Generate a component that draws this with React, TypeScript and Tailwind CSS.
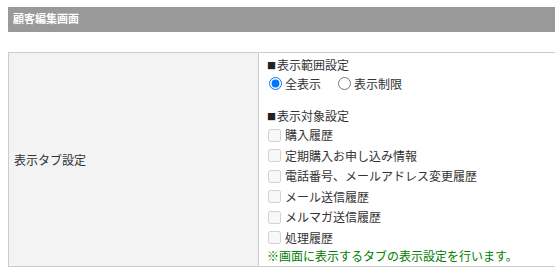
import React from "react";

const font = { fontFamily: '"Noto Sans CJK JP", "Noto Sans", sans-serif' };

const items = [
  "購入履歴",
  "定期購入お申し込み情報",
  "電話番号、メールアドレス変更履歴",
  "メール送信履歴",
  "メルマガ送信履歴",
  "処理履歴",
];

export default function App() {
  return (
    <div
      className="w-[555px] h-[271px] overflow-hidden bg-white pt-[7px] pl-[8px] text-[12px] text-[#333]"
      style={font}
    >
      <div className="w-[640px] h-[25px] bg-[#999999] flex items-center pl-[5px] pb-[2px]">
        <span className="text-white font-bold text-[11px]">顧客編集画面</span>
      </div>
      <div className="mt-[20px] w-[640px] flex border border-[#cccccc]">
        <div className="w-[250px] shrink-0 bg-[#f2f3f2] border-r border-[#cccccc] flex items-center pl-[5px] pt-[1px]">
          表示タブ設定
        </div>
        <div className="flex-1 pl-[8px] pt-[3px] pb-[3px]">
          <div className="h-[18px] flex items-center">
            <span className="inline-block w-[10px] text-[9px] leading-[9px] text-[#222]">■</span>
            <span>表示範囲設定</span>
          </div>
          <div className="h-[19px] flex items-center">
            <label className="flex items-center">
              <input
                type="radio"
                name="r"
                defaultChecked
                className="w-[13px] h-[13px] m-0 ml-[2px] mr-[3px]"
              />
              <span>全表示</span>
            </label>
            <label className="flex items-center ml-[17px]">
              <input
                type="radio"
                name="r"
                className="w-[13px] h-[13px] m-0 mr-[3px]"
              />
              <span>表示制限</span>
            </label>
          </div>
          <div className="h-[18px] flex items-center mt-[14px]">
            <span className="inline-block w-[10px] text-[9px] leading-[9px] text-[#222]">■</span>
            <span>表示対象設定</span>
          </div>
          {items.map((t) => (
            <div key={t} className="h-[20.5px] flex items-center">
              <input
                type="checkbox"
                disabled
                className="w-[13px] h-[13px] m-0 ml-[1px] mr-[4px]"
              />
              <span>{t}</span>
            </div>
          ))}
          <div className="h-[15px] leading-[15px] text-[#008000]">
            ※画面に表示するタブの表示設定を行います。
          </div>
        </div>
      </div>
    </div>
  );
}
